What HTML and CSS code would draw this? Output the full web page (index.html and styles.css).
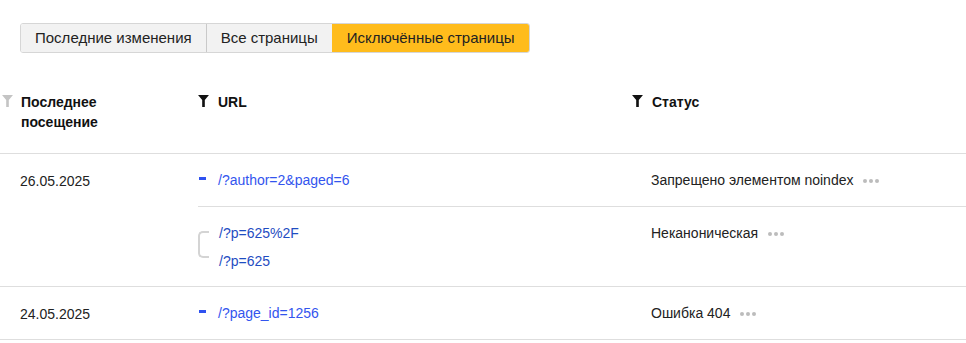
FILE: index.html
```html
<!DOCTYPE html>
<html lang="ru">
<head>
    <meta charset="UTF-8">
    <meta name="viewport" content="width=device-width, initial-scale=1.0">
    <title>Исключённые страницы</title>
    <link rel="stylesheet" href="styles.css">
</head>
<body>
    <div class="tabs">
        <div class="tab">Последние изменения</div>
        <div class="tab">Все страницы</div>
        <div class="tab active">Исключённые страницы</div>
    </div>

    <div class="table">
        <div class="thead">
            <div class="th th-first">
                <svg class="filter muted" viewBox="0 0 10 11"><path d="M0 0H10L6.2 4.6V11H3.8V4.6Z"/></svg>
                <span>Последнее<br>посещение</span>
            </div>
            <div class="th">
                <svg class="filter" viewBox="0 0 10 11"><path d="M0 0H10L6.2 4.6V11H3.8V4.6Z"/></svg>
                <span>URL</span>
            </div>
            <div class="th">
                <svg class="filter" viewBox="0 0 10 11"><path d="M0 0H10L6.2 4.6V11H3.8V4.6Z"/></svg>
                <span>Статус</span>
            </div>
        </div>

        <div class="row">
            <div class="date">26.05.2025</div>
            <div class="entries">
                <div class="entry">
                    <div class="url">
                        <span class="dash"></span>
                        <div class="links">
                            <a href="#">/?author=2&amp;paged=6</a>
                        </div>
                    </div>
                    <div class="status">Запрещено элементом noindex <span class="more"><i></i><i></i><i></i></span></div>
                </div>
                <div class="entry">
                    <div class="url">
                        <span class="bracket"></span>
                        <div class="links">
                            <a href="#" class="visited">/?p=625%2F</a>
                            <a href="#" class="visited">/?p=625</a>
                        </div>
                    </div>
                    <div class="status">Неканоническая <span class="more"><i></i><i></i><i></i></span></div>
                </div>
            </div>
        </div>

        <div class="row">
            <div class="date">24.05.2025</div>
            <div class="entries">
                <div class="entry">
                    <div class="url">
                        <span class="dash"></span>
                        <div class="links">
                            <a href="#">/?page_id=1256</a>
                        </div>
                    </div>
                    <div class="status">Ошибка 404 <span class="more"><i></i><i></i><i></i></span></div>
                </div>
            </div>
        </div>
    </div>
</body>
</html>
```

FILE: styles.css
```css
body {
    margin: 0;
    font-family: "Liberation Sans", Arial, sans-serif;
    font-size: 14px;
    color: #222;
    background: #fff;
}

.tabs {
    display: inline-flex;
    margin: 23px 0 0 20px;
    border: 1px solid #d6d6d6;
    border-radius: 3px;
    overflow: hidden;
}

.tab {
    height: 28px;
    line-height: 28px;
    padding: 0 14px;
    font-size: 15px;
    background-color: #f2f2f2;
    color: #222;
    border-left: 1px solid #c9c9c9;
}

.tab:first-child {
    border-left: none;
}

.tab.active {
    background-color: #ffbc1c;
    border-left-color: #ffbc1c;
}

.table {
    margin-top: 39px;
}

.thead {
    display: grid;
    grid-template-columns: 198px 434px 1fr;
    height: 61px;
    border-bottom: 1px solid #dedede;
}

.th {
    display: flex;
    align-items: flex-start;
    gap: 9px;
    font-weight: bold;
    line-height: 20px;
    color: #111;
}

.th-first {
    padding-left: 2px;
    gap: 8px;
}

.filter {
    width: 11px;
    height: 12px;
    margin-top: 3px;
    flex-shrink: 0;
    fill: #111;
}

.filter.muted {
    fill: #c4c4c4;
}

.row {
    display: grid;
    grid-template-columns: 198px 1fr;
    border-bottom: 1px solid #dedede;
}

.date {
    padding: 18px 0 0 20px;
    line-height: 18px;
    color: #222;
}

.entry {
    display: grid;
    grid-template-columns: 434px 1fr;
    padding: 17px 0 17px;
    border-bottom: 1px solid #dedede;
}

.entry:last-child {
    border-bottom: none;
}

.entries .entry:nth-child(2) {
    padding-bottom: 16px;
}

.url {
    display: flex;
    align-items: flex-start;
}

.links {
    display: flex;
    flex-direction: column;
    gap: 10px;
}

a {
    color: #3355ee;
    text-decoration: none;
    line-height: 18px;
}

a.visited {
    color: #1f4dc2;
}

.dash {
    width: 7px;
    height: 3px;
    margin: 6px 12px 0 1px;
    background-color: #2f52f0;
}

.bracket {
    width: 9px;
    height: 23px;
    margin: 7px 10px 0 0;
    border: 2px solid #d4d4d4;
    border-right: none;
    border-radius: 5px 0 0 5px;
}

.status {
    padding-left: 19px;
    line-height: 18px;
    color: #222;
}

.more {
    display: inline-flex;
    gap: 2px;
    margin-left: 6px;
    vertical-align: middle;
}

.more i {
    width: 4px;
    height: 4px;
    border-radius: 50%;
    background-color: #bcbcbc;
}
```
